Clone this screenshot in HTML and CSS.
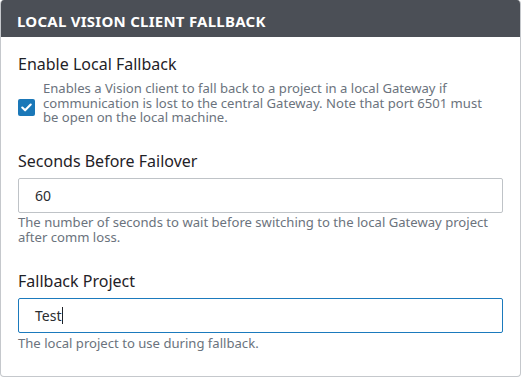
FILE: index.html
```html
<!DOCTYPE html>
<html lang="en">
<head>
<meta charset="utf-8">
<title>Local Vision Client Fallback</title>
<link rel="stylesheet" href="styles.css">
</head>
<body>
<section class="panel">
  <header class="panel-header">LOCAL VISION CLIENT FALLBACK</header>
  <div class="panel-body">
    <div class="field field-check">
      <div class="field-label">Enable Local Fallback</div>
      <div class="check-row">
        <span class="checkbox">
          <svg width="11" height="9" viewBox="0 0 11 9"><path d="M1.3 4.6 L4.1 7.3 L9.7 1.5" fill="none" stroke="#fff" stroke-width="2.1" stroke-linecap="round" stroke-linejoin="round"/></svg>
        </span>
        <p class="check-desc">Enables a Vision client to fall back to a project in a local Gateway if communication is lost to the central Gateway. Note that port 6501 must be open on the local machine.</p>
      </div>
    </div>
    <div class="field">
      <div class="field-label">Seconds Before Failover</div>
      <div class="text-input">60</div>
      <p class="help">The number of seconds to wait before switching to the local Gateway project after comm loss.</p>
    </div>
    <div class="field">
      <div class="field-label">Fallback Project</div>
      <div class="text-input focused">Test<span class="caret"></span></div>
      <p class="help">The local project to use during fallback.</p>
    </div>
  </div>
</section>
</body>
</html>
```
FILE: styles.css
```css
html, body {
  margin: 0;
  padding: 0;
  background: #ffffff;
}
body {
  font-family: "Noto Sans", "Open Sans", sans-serif;
  width: 522px;
  height: 377px;
}
.panel {
  width: 521px;
  height: 377px;
  box-sizing: border-box;
  border: 1px solid #c5c8cc;
  border-top: none;
  border-radius: 4px;
  overflow: hidden;
  display: flex;
  flex-direction: column;
}
.panel-header {
  height: 43px;
  box-sizing: border-box;
  background: #4b4f56;
  color: #ffffff;
  font-weight: 700;
  font-size: 15px;
  letter-spacing: 0.25px;
  line-height: 20px;
  padding: 11px 17px 0 17px;
  margin: 0 -1px;
}
.panel-body {
  padding: 16px 17px 0 17px;
}
.field {
  margin-bottom: 26px;
}
.field-check {
  margin-bottom: 25px;
}
.field-label {
  font-size: 16px;
  line-height: 22px;
  color: #1f2227;
  margin-bottom: 6px;
}
.check-row {
  display: flex;
  align-items: flex-start;
  gap: 8px;
}
.checkbox {
  flex: none;
  width: 17px;
  height: 17px;
  margin-top: 18px;
  border-radius: 2px;
  background: #1b78b8;
  display: flex;
  align-items: center;
  justify-content: center;
}
.check-desc, .help {
  margin: 0;
  font-size: 13.1px;
  line-height: 14.5px;
  color: #6b737d;
}
.check-desc {
  padding-right: 6px;
}
.help {
  margin-top: 2.5px;
}
.text-input {
  height: 35px;
  box-sizing: border-box;
  border: 1px solid #bfc3c7;
  border-radius: 2px;
  padding: 0 16px;
  font-size: 14px;
  color: #2a2d31;
  display: flex;
  align-items: center;
}
.text-input.focused {
  border-color: #1b7abd;
}
.caret {
  display: inline-block;
  width: 1px;
  height: 17px;
  background: #1f2227;
  margin-left: 1px;
}
```
